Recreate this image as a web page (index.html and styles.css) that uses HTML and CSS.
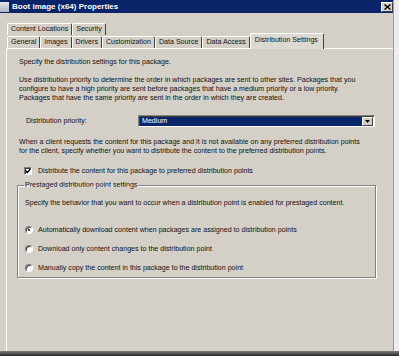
FILE: index.html
```html
<!DOCTYPE html>
<html>
<head>
    <meta charset="utf-8">
    <link rel="stylesheet" href="styles.css">
</head>
<body>
<div class="window">
    <div class="titlebar">
        <span class="appicon"></span>
        <span class="title">Boot image (x64) Properties</span>
        <span class="closebtn">
            <svg width="7" height="6" viewBox="0 0 7 6"><path d="M0.5 0.5 L6.5 5.5 M6.5 0.5 L0.5 5.5" stroke="#000" stroke-width="1.4"/></svg>
        </span>
    </div>

    <div class="tabs">
        <div class="tabrow">
            <span class="tab">Content Locations</span>
            <span class="tab">Security</span>
        </div>
        <div class="tabrow">
            <span class="tab">General</span>
            <span class="tab">Images</span>
            <span class="tab">Drivers</span>
            <span class="tab">Customization</span>
            <span class="tab">Data Source</span>
            <span class="tab">Data Access</span>
            <span class="tab active">Distribution Settings</span>
        </div>
    </div>

    <div class="pane">
        <div class="txt intro">Specify the distribution settings for this package.</div>

        <div class="txt para">Use distribution priority to determine the order in which packages are sent to other sites. Packages that you<br>configure to have a high priority are sent before packages that have a medium priority or a low priority.<br>Packages that have the same priority are sent in the order in which they are created.</div>

        <div class="priority">
            <span class="plabel">Distribution priority:</span>
            <div class="combo">
                <span class="combotext">Medium</span>
                <span class="combobtn">
                    <svg width="5" height="3" viewBox="0 0 5 3"><path d="M0 0 H5 L2.5 3 Z" fill="#000"/></svg>
                </span>
            </div>
        </div>

        <div class="txt client">When a client requests the content for this package and it is not available on any preferred distribution points<br>for the client, specify whether you want to distribute the content to the preferred distribution points.</div>

        <div class="check">
            <span class="box">
                <svg width="6" height="6" viewBox="0 0 6 6"><path d="M0.5 2.5 L2.3 4.6 L5.5 0.8" stroke="#000" stroke-width="1.4" fill="none"/></svg>
            </span>
            <span>Distribute the content for this package to preferred distribution points</span>
        </div>

        <fieldset class="group">
            <legend>Prestaged distribution point settings</legend>
            <div class="gtext">Specify the behavior that you want to occur when a distribution point is enabled for prestaged content.</div>
            <div class="radio first"><span class="dot on"></span><span>Automatically download content when packages are assigned to distribution points</span></div>
            <div class="radio"><span class="dot"></span><span>Download only content changes to the distribution point</span></div>
            <div class="radio"><span class="dot"></span><span>Manually copy the content in this package to the distribution point</span></div>
        </fieldset>
    </div>
</div>
<div class="shadow"></div>
</body>
</html>
```

FILE: styles.css
```css
body {
    margin: 0;
    background-color: #ededed;
    font-family: "Liberation Sans", Arial, sans-serif;
    font-size: 7.1px;
    color: #111;
    overflow: hidden;
}

.window {
    width: 393px;
    height: 351px;
    background-color: #d4d0c8;
    border-right: 1px solid #9a9a9a;
    overflow: hidden;
    display: flex;
    flex-direction: column;
}

/* title bar */

.titlebar {
    height: 13px;
    flex: none;
    background-color: #0a246a;
    color: white;
    display: flex;
    align-items: center;
}

.appicon {
    width: 9px;
    height: 10px;
    background: linear-gradient(#e6e6e6, #a9b3c6);
}

.title {
    margin-left: 3px;
    font-weight: bold;
    font-size: 8px;
}

.closebtn {
    margin-left: auto;
    width: 10px;
    height: 8px;
    background-color: #d4d0c8;
    border-top: 1px solid #fff;
    border-left: 1px solid #fff;
    border-right: 1px solid #404040;
    border-bottom: 1px solid #404040;
    display: flex;
    align-items: center;
    justify-content: center;
}

/* tabs */

.tabs {
    margin-top: 10px;
    padding-left: 7px;
}

.tabrow {
    display: flex;
    height: 12px;
}

.tabrow + .tabrow {
    margin-top: 1px;
}

.tab {
    padding: 0 3px;
    line-height: 11px;
    border-top: 1px solid #fff;
    border-left: 1px solid #fff;
    border-right: 1px solid #404040;
    border-radius: 2px 2px 0 0;
    white-space: nowrap;
}

.tab.active {
    margin-top: -3px;
    height: 15px;
    line-height: 13px;
    padding: 0 5px 0 4px;
    background-color: #dcd9d2;
    position: relative;
    z-index: 1;
}

/* page */

.pane {
    margin-left: 6px;
    width: 368px;
    flex: 1;
    border-top: 1px solid #fff;
    border-left: 1px solid #fff;
    border-right: 1px solid #404040;
    box-shadow: inset -1px 0 #808080;
    padding: 9px 10px 0 10px;
}

.txt {
    padding-left: 2px;
    line-height: 9px;
    white-space: nowrap;
}

.para {
    margin-top: 9px;
}

.priority {
    margin-top: 12px;
    height: 11px;
    display: flex;
    align-items: center;
}

.plabel {
    width: 112px;
    padding-left: 9px;
}

.combo {
    width: 233px;
    height: 9px;
    border-top: 1px solid #808080;
    border-left: 1px solid #808080;
    border-right: 1px solid #fff;
    border-bottom: 1px solid #fff;
    box-shadow: inset 1px 1px #404040;
    background-color: #fff;
    display: flex;
    padding: 1px 1px 0 1px;
}

.combotext {
    flex: 1;
    background-color: #0a246a;
    color: #fff;
    line-height: 8px;
    padding-left: 2px;
}

.combobtn {
    width: 9px;
    height: 7px;
    background-color: #d4d0c8;
    border-top: 1px solid #fff;
    border-left: 1px solid #fff;
    border-right: 1px solid #404040;
    border-bottom: 1px solid #404040;
    display: flex;
    align-items: center;
    justify-content: center;
}

.client {
    margin-top: 12px;
}

.check {
    margin-top: 10px;
    height: 9px;
    display: flex;
    align-items: center;
    padding-left: 7px;
    white-space: nowrap;
}

.box {
    width: 6px;
    height: 6px;
    margin-right: 6px;
    background-color: #fff;
    border-top: 1px solid #808080;
    border-left: 1px solid #808080;
    border-right: 1px solid #fff;
    border-bottom: 1px solid #fff;
    box-shadow: inset 1px 1px #404040;
    display: flex;
    align-items: center;
    justify-content: center;
}

/* prestaged group */

.group {
    margin: 6px 0 0 0;
    width: 345px;
    padding: 0 6px 5px 6px;
    border: 1px solid #808080;
    box-shadow: 1px 1px #fff, inset 1px 1px #fff;
    min-width: 0;
}

.group legend {
    padding: 0 1px;
    line-height: 9px;
    white-space: nowrap;
}

.gtext {
    margin-top: 9px;
    padding-left: 1px;
    line-height: 9px;
    white-space: nowrap;
}

.radio {
    margin-top: 10px;
    height: 9px;
    display: flex;
    align-items: center;
    padding-left: 1px;
    white-space: nowrap;
}

.radio.first {
    margin-top: 17px;
}

.dot {
    width: 6px;
    height: 6px;
    margin-right: 5px;
    border-radius: 50%;
    background-color: #fff;
    border-top: 1px solid #808080;
    border-left: 1px solid #808080;
    border-right: 1px solid #fff;
    border-bottom: 1px solid #fff;
    box-shadow: inset 1px 1px #404040;
    display: flex;
    align-items: center;
    justify-content: center;
}

.dot.on::after {
    content: "";
    width: 2px;
    height: 2px;
    border-radius: 50%;
    background-color: #000;
}

.shadow {
    height: 5px;
    background: linear-gradient(#7d7d7d, #262626);
}
```
